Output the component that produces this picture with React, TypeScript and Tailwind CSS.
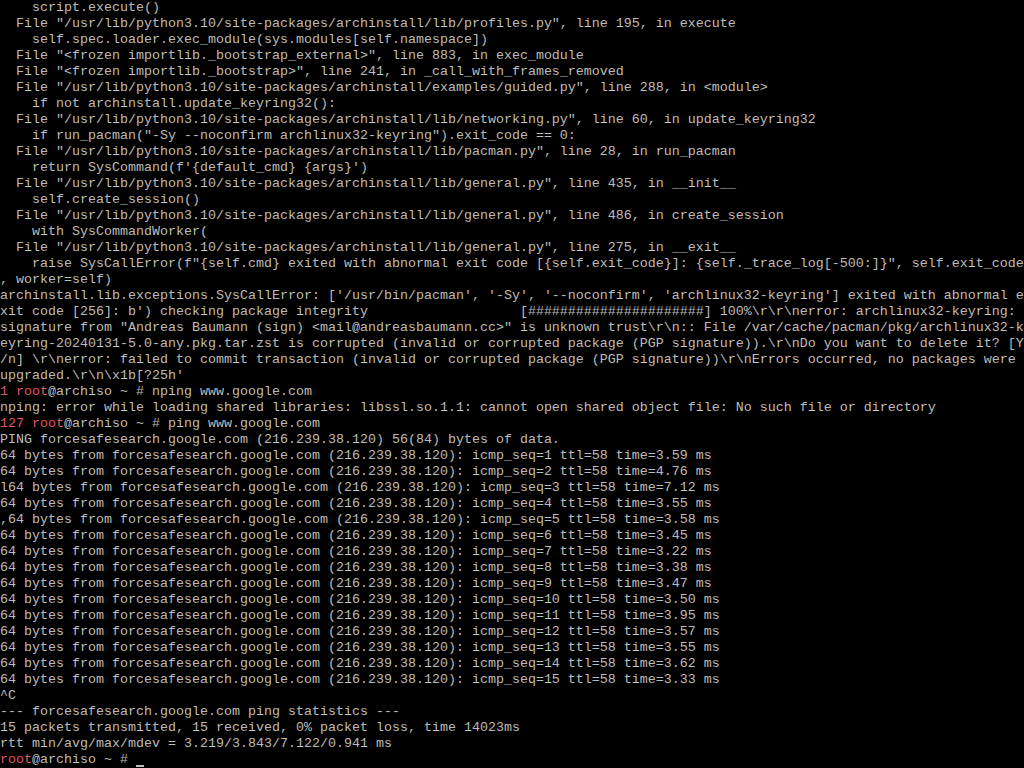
const GRAY = 'text-[#bcbcbc]'

const lines: string[] = [
  '    script.execute()',
  '  File "/usr/lib/python3.10/site-packages/archinstall/lib/profiles.py", line 195, in execute',
  '    self.spec.loader.exec_module(sys.modules[self.namespace])',
  '  File "<frozen importlib._bootstrap_external>", line 883, in exec_module',
  '  File "<frozen importlib._bootstrap>", line 241, in _call_with_frames_removed',
  '  File "/usr/lib/python3.10/site-packages/archinstall/examples/guided.py", line 288, in <module>',
  '    if not archinstall.update_keyring32():',
  '  File "/usr/lib/python3.10/site-packages/archinstall/lib/networking.py", line 60, in update_keyring32',
  '    if run_pacman("-Sy --noconfirm archlinux32-keyring").exit_code == 0:',
  '  File "/usr/lib/python3.10/site-packages/archinstall/lib/pacman.py", line 28, in run_pacman',
  "    return SysCommand(f'{default_cmd} {args}')",
  '  File "/usr/lib/python3.10/site-packages/archinstall/lib/general.py", line 435, in __init__',
  '    self.create_session()',
  '  File "/usr/lib/python3.10/site-packages/archinstall/lib/general.py", line 486, in create_session',
  '    with SysCommandWorker(',
  '  File "/usr/lib/python3.10/site-packages/archinstall/lib/general.py", line 275, in __exit__',
  '    raise SysCallError(f"{self.cmd} exited with abnormal exit code [{self.exit_code}]: {self._trace_log[-500:]}", self.exit_code',
  ', worker=self)',
  "archinstall.lib.exceptions.SysCallError: ['/usr/bin/pacman', '-Sy', '--noconfirm', 'archlinux32-keyring'] exited with abnormal e",
  "xit code [256]: b') checking package integrity                   [######################] 100%\\r\\r\\nerror: archlinux32-keyring: ",
  'signature from "Andreas Baumann (sign) <mail@andreasbaumann.cc>" is unknown trust\\r\\n:: File /var/cache/pacman/pkg/archlinux32-k',
  'eyring-20240131-5.0-any.pkg.tar.zst is corrupted (invalid or corrupted package (PGP signature)).\\r\\nDo you want to delete it? [Y',
  '/n] \\r\\nerror: failed to commit transaction (invalid or corrupted package (PGP signature))\\r\\nErrors occurred, no packages were ',
  "upgraded.\\r\\n\\x1b[?25h'",
]

const pings: [string, string, string][] = [
  ['64', '1', '3.59'],
  ['64', '2', '4.76'],
  ['l64', '3', '7.12'],
  ['64', '4', '3.55'],
  [',64', '5', '3.58'],
  ['64', '6', '3.45'],
  ['64', '7', '3.22'],
  ['64', '8', '3.38'],
  ['64', '9', '3.47'],
  ['64', '10', '3.50'],
  ['64', '11', '3.95'],
  ['64', '12', '3.57'],
  ['64', '13', '3.55'],
  ['64', '14', '3.62'],
  ['64', '15', '3.33'],
]

function Line({ children }: { children: React.ReactNode }) {
  return <div className="h-4 leading-4 whitespace-pre">{children}</div>
}

function Prompt({ status, cmd }: { status?: string; cmd: string }) {
  return (
    <Line>
      {status && <span className="text-[#e0566a]">{status} </span>}
      <span className="text-[#e0566a]">root</span>
      {'@archiso ~ # ' + cmd}
    </Line>
  )
}

export default function App() {
  return (
    <div
      className={`w-[1024px] h-[768px] overflow-hidden bg-black ${GRAY} text-[13.333px]`}
      style={{ fontFamily: '"Liberation Mono", "DejaVu Sans Mono", monospace' }}
    >
      {lines.map((l, i) => (
        <Line key={i}>{l}</Line>
      ))}
      <Prompt status="1" cmd="nping www.google.com" />
      <Line>nping: error while loading shared libraries: libssl.so.1.1: cannot open shared object file: No such file or directory</Line>
      <Prompt status="127" cmd="ping www.google.com" />
      <Line>PING forcesafesearch.google.com (216.239.38.120) 56(84) bytes of data.</Line>
      {pings.map(([b, seq, t]) => (
        <Line key={seq}>
          {`${b} bytes from forcesafesearch.google.com (216.239.38.120): icmp_seq=${seq} ttl=58 time=${t} ms`}
        </Line>
      ))}
      <Line>^C</Line>
      <Line>--- forcesafesearch.google.com ping statistics ---</Line>
      <Line>15 packets transmitted, 15 received, 0% packet loss, time 14023ms</Line>
      <Line>rtt min/avg/max/mdev = 3.219/3.843/7.122/0.941 ms</Line>
      <div className="h-4 leading-4 whitespace-pre flex items-start">
        <span>
          <span className="text-[#e0566a]">root</span>
          {'@archiso ~ # '}
        </span>
        <span className="w-2 h-4 flex items-end pb-[1px]">
          <span className="block w-2 h-[2px] bg-[#bcbcbc]" />
        </span>
      </div>
    </div>
  )
}
